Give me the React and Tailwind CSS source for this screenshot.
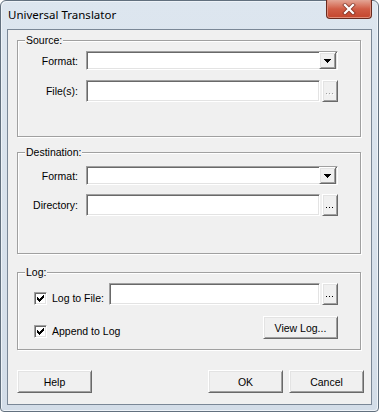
import React from "react";

const FONT = { fontFamily: '"Liberation Sans", Arial, sans-serif' };

function Sunken({ className = "", children }) {
  return (
    <div
      className={
        "bg-white border border-t-[#a0a0a0] border-l-[#a0a0a0] border-r-white border-b-white shadow-[inset_1px_1px_0_#696969,inset_-1px_-1px_0_#e3e3e3] " +
        className
      }
    >
      {children}
    </div>
  );
}

function Raised({ className = "", children }) {
  return (
    <div
      className={
        "bg-[#f0f0f0] border border-t-white border-l-white border-r-[#696969] border-b-[#696969] shadow-[inset_1px_1px_0_#e3e3e3,inset_-1px_-1px_0_#a0a0a0] flex items-center justify-center text-black " +
        className
      }
    >
      {children}
    </div>
  );
}

function Combo() {
  return (
    <Sunken className="w-[252px] h-[19px] flex justify-end items-center pr-[1px]">
      <Raised className="w-[17px] h-[17px]">
        <svg width="7" height="4" viewBox="0 0 7 4" shapeRendering="crispEdges">
          <rect x="0" y="0" width="7" height="1" fill="#000" />
          <rect x="1" y="1" width="5" height="1" fill="#000" />
          <rect x="2" y="2" width="3" height="1" fill="#000" />
          <rect x="3" y="3" width="1" height="1" fill="#000" />
        </svg>
      </Raised>
    </Sunken>
  );
}

function Dots({ disabled }) {
  return (
    <Raised className="w-[16px] h-[22px] ml-[2px]">
      <svg width="9" height="2" viewBox="0 0 9 2" shapeRendering="crispEdges" className="mt-[5px]">
        {disabled ? (
          <>
            <rect x="1" y="1" width="1" height="1" fill="#fff" />
            <rect x="4" y="1" width="1" height="1" fill="#fff" />
            <rect x="7" y="1" width="1" height="1" fill="#fff" />
            <rect x="0" y="0" width="1" height="1" fill="#a0a0a0" />
            <rect x="3" y="0" width="1" height="1" fill="#a0a0a0" />
            <rect x="6" y="0" width="1" height="1" fill="#a0a0a0" />
          </>
        ) : (
          <>
            <rect x="0" y="0" width="1" height="1" fill="#000" />
            <rect x="3" y="0" width="1" height="1" fill="#000" />
            <rect x="6" y="0" width="1" height="1" fill="#000" />
          </>
        )}
      </svg>
    </Raised>
  );
}

function Check() {
  return (
    <Sunken className="w-[13px] h-[13px] flex items-center justify-center shrink-0">
      <svg width="7" height="7" viewBox="0 0 7 7" shapeRendering="crispEdges">
        <rect x="6" y="0" width="1" height="1" fill="#000" />
        <rect x="5" y="1" width="2" height="1" fill="#000" />
        <rect x="0" y="2" width="1" height="1" fill="#000" />
        <rect x="4" y="2" width="3" height="1" fill="#000" />
        <rect x="0" y="3" width="2" height="1" fill="#000" />
        <rect x="3" y="3" width="3" height="1" fill="#000" />
        <rect x="0" y="4" width="5" height="1" fill="#000" />
        <rect x="1" y="5" width="3" height="1" fill="#000" />
        <rect x="2" y="6" width="1" height="1" fill="#000" />
      </svg>
    </Sunken>
  );
}

function Group({ label, className = "", children }) {
  return (
    <div
      className={
        "relative border border-[#a0a0a0] shadow-[inset_1px_1px_0_#fff,1px_1px_0_#fff] " + className
      }
    >
      <span className="absolute -top-[8px] left-[7px] px-[1px] bg-[#f0f0f0] leading-[14px]">
        {label}
      </span>
      {children}
    </div>
  );
}

function Label({ children }) {
  return <div className="w-[60px] text-right shrink-0 mr-[8px]">{children}</div>;
}

export default function App() {
  return (
    <div className="w-[379px] h-[412px] bg-white">
      <div
        className="w-[379px] h-[412px] flex flex-col rounded-t-[6px] rounded-b-[4px] border border-[#62707e] bg-gradient-to-b from-[#dde6ef] to-[#d3dde8] shadow-[inset_1px_1px_0_#eef3f8,inset_-1px_-1px_0_#eef3f8]"
        style={FONT}
      >
        <div className="h-[28px] flex items-start shrink-0">
          <div className="pl-[7px] pt-[7px] text-[11.5px] leading-[14px] text-black" style={{ fontFamily: '"Noto Sans", "Liberation Sans", sans-serif' }}>
            Universal Translator
          </div>
          <div className="ml-auto mr-[6px] -mt-[1px] w-[46px] h-[19px] rounded-b-[4px] border border-t-0 border-[#6a2a1e] bg-gradient-to-b from-[#e3a595] via-[#d05c45] to-[#c4452c] shadow-[inset_0_-1px_0_#e08d78,inset_1px_0_0_#dd8c79,inset_-1px_0_0_#dd8c79] flex items-center justify-center">
            <svg width="14" height="12" viewBox="0 0 14 12">
              <path d="M3 2 L11 10 M11 2 L3 10" stroke="#5a2018" strokeWidth="4" strokeLinecap="square" opacity="0.55" />
              <path d="M3 2 L11 10 M11 2 L3 10" stroke="#ffffff" strokeWidth="2.2" strokeLinecap="square" />
            </svg>
          </div>
        </div>
        <div className="mx-[6px] mb-[6px] flex-1 border border-[#7a8796] bg-[#f0f0f0] pl-[9px] pr-[10px] flex flex-col text-[10.5px] leading-[14px] text-black">
          <Group label="Source:" className="mt-[10px] h-[97px] pt-[10px]">
            <div className="flex items-center">
              <Label>Format:</Label>
              <Combo />
            </div>
            <div className="flex items-center mt-[10px]">
              <Label>File(s):</Label>
              <Sunken className="w-[234px] h-[22px]" />
              <Dots disabled />
            </div>
          </Group>

          <Group label="Destination:" className="mt-[15px] h-[102px] pt-[13px]">
            <div className="flex items-center">
              <Label>Format:</Label>
              <Combo />
            </div>
            <div className="flex items-center mt-[9px]">
              <Label>Directory:</Label>
              <Sunken className="w-[234px] h-[22px]" />
              <Dots />
            </div>
          </Group>

          <Group label="Log:" className="mt-[18px] h-[78px] pt-[10px]">
            <div className="flex items-start">
              <div className="flex items-center w-[91px] pl-[16px] mt-[8px] shrink-0">
                <Check />
                <span className="ml-[5px]">Log to File:</span>
              </div>
              <Sunken className="w-[211px] h-[22px]" />
              <Dots />
            </div>
            <div className="flex items-start mt-[11px]">
              <div className="flex items-center pl-[16px] mt-[8px]">
                <Check />
                <span className="ml-[5px]">Append to Log</span>
              </div>
              <Raised className="ml-auto mr-[22px] w-[75px] h-[23px]">View Log...</Raised>
            </div>
          </Group>

          <div className="flex mt-[20px] -mr-[3px]">
            <Raised className="w-[75px] h-[23px]">Help</Raised>
            <Raised className="ml-auto w-[75px] h-[23px]">OK</Raised>
            <Raised className="ml-[6px] w-[75px] h-[23px]">Cancel</Raised>
          </div>
        </div>
      </div>
    </div>
  );
}
